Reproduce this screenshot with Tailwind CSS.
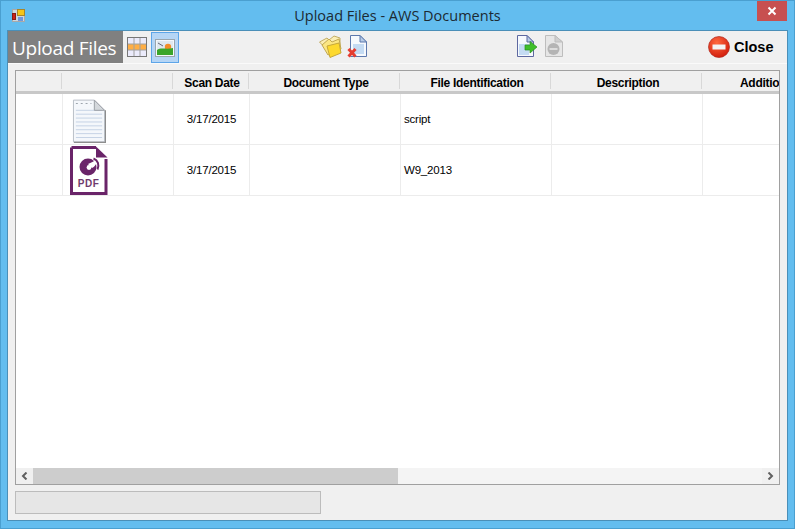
<!DOCTYPE html>
<html lang="en">
<head>
  <meta charset="UTF-8">
  <title>Upload Files - AWS Documents</title>
  <script src="https://cdn.jsdelivr.net/npm/@tailwindcss/browser@4"></script>
</head>
<body class="m-0 overflow-hidden bg-white">
  <div class="w-[795px] h-[529px] flex flex-col bg-[#63bdef] border border-[#4a9fd0] font-['Liberation_Sans',sans-serif] text-black">

    <!-- Title bar -->
    <div class="h-[29px] flex shrink-0 items-start relative">
      <svg class="absolute left-[10px] top-[7px]" width="16" height="16" viewBox="0 0 16 16">
        <rect x="1.500" y="1.500" width="12" height="12" fill="#cfd8de" stroke="#a9a9a9"/>
        <rect x="6.500" y="1.500" width="7" height="6" fill="#f5c518" stroke="#a8862a"/>
        <rect x="1.500" y="5.500" width="3" height="6" fill="#c9221c" stroke="#8b1a14"/>
        <rect x="7" y="9" width="5" height="4" fill="#6f97dd"/>
      </svg>
      <div class="w-full text-center text-[14.5px] leading-[30px] font-['Open_Sans',sans-serif] text-[#1c2a33]">Upload Files - AWS Documents</div>
      <div class="absolute right-[7px] top-0 w-[30px] h-[20px] bg-[#c75050] flex items-center justify-center">
        <svg width="10" height="10" viewBox="0 0 10 10"><path d="M1.500 1.500 8.500 8.500M8.500 1.500 1.500 8.500" stroke="#fff" stroke-width="2"/></svg>
      </div>
    </div>

    <!-- Window body -->
    <div class="mx-[6px] mb-[7px] flex-1 flex flex-col bg-[#f0f0f0] border border-[#4a8fb8] min-h-0">

      <!-- Toolbar -->
      <div class="h-[33px] flex items-start shrink-0 relative border-b border-[#fafafa]">
        <div class="w-[115px] h-[32px] bg-[#808080] text-white text-[19px] tracking-[-0.300px] leading-[34px] pl-[4px] font-['Open_Sans',sans-serif] whitespace-nowrap">Upload Files</div>
        <!-- grid view -->
        <svg class="ml-[4px] mt-[6px]" width="20" height="20" viewBox="0 0 20 20">
          <rect x="0.500" y="0.500" width="19" height="19" fill="#ebebfb" stroke="#777"/>
          <rect x="1" y="7" width="18" height="6" fill="#ffae45"/>
          <path d="M7 1V19M13 1V19M1 7H19M1 13H19" stroke="#a0a0a0" stroke-width="1"/>
        </svg>
        <!-- picture view -->
        <div class="ml-[4px] mt-[1px] w-[28px] h-[31px] bg-[#b5d5f5] border border-[#5da5e8] flex items-center justify-center">
          <svg width="20" height="18" viewBox="0 0 20 18">
            <rect x="0.500" y="0.500" width="19" height="17" fill="#f4f7fb" stroke="#9aa5ad"/>
            <rect x="2" y="2" width="16" height="14" fill="#dfe7ee"/>
            <circle cx="13" cy="8" r="3.200" fill="#f28c28"/>
            <path d="M2 11C6 8 11 11 18 9V16H2Z" fill="#3aa52a"/>
            <path d="M3 4 8 7" stroke="#667" stroke-width="1"/>
          </svg>
        </div>
        <!-- open folder -->
        <svg class="absolute left-[311px] top-[4px]" width="23" height="23" viewBox="0 0 23 23">
          <path d="M0.500 7 8 3 10 5 15 1 21 3 21 12 9 16Z" fill="#fbeeb5" stroke="#c2ad66"/>
          <path d="M3 10 10 4 13 7 20 4 22 14 9 20Z" fill="#fbe683" stroke="#c2a850"/>
          <path d="M8 11 20 8 22 18 11 22.500Z" fill="#fdd92e" stroke="#c6a83a"/>
        </svg>
        <!-- remove file -->
        <svg class="absolute left-[339px] top-[4px]" width="21" height="23" viewBox="0 0 21 23">
          <path d="M3.500 .5H13L19.500 7V21.500H3.500Z" fill="#f6f9fd" stroke="#5d78ad"/>
          <path d="M13 .5V7H19.500Z" fill="#b7cbe6" stroke="#5d78ad"/>
          <rect x="6" y="9" width="11" height="10" fill="#c4dbf3"/>
          <path d="M1.500 14 8.500 21.500M8.500 14 1.500 21.500" stroke="#e53d30" stroke-width="3"/>
        </svg>
        <!-- send file -->
        <svg class="absolute left-[508px] top-[4px]" width="22" height="23" viewBox="0 0 22 23">
          <path d="M1.500 .5H11L17.500 7V21.500H1.500Z" fill="#f6f9fd" stroke="#5d68a0"/>
          <path d="M11 .5V7H17.500Z" fill="#b7cbe6" stroke="#5d68a0"/>
          <rect x="3" y="9" width="10" height="11" fill="#c4dbf3"/>
          <path d="M9 10H14V6.500L21 12 14 18V15H9Z" fill="#3fbf2a" stroke="#2a8f20" stroke-width=".7"/>
        </svg>
        <!-- stop, disabled -->
        <svg class="absolute left-[536px] top-[4px]" width="20" height="23" viewBox="0 0 20 23">
          <path d="M1.500 .5H11L18.500 7V21.500H1.500Z" fill="#e6e6e6" stroke="#bdbdbd"/>
          <path d="M11 .5V7H18.500Z" fill="#cfcfcf" stroke="#bdbdbd"/>
          <circle cx="9.500" cy="14" r="6" fill="#b4b4b4"/>
          <rect x="5.500" y="13" width="8" height="2" fill="#dcdcdc"/>
        </svg>
        <!-- close -->
        <div class="absolute left-[700px] top-[5px] flex items-center gap-[4px]">
          <svg width="22" height="22" viewBox="0 0 22 22">
            <defs><radialGradient id="redball" cx="40%" cy="30%" r="75%"><stop offset="0" stop-color="#ff6a40"/><stop offset="1" stop-color="#d01a0a"/></radialGradient></defs>
            <circle cx="11" cy="11" r="10.500" fill="url(#redball)" stroke="#b02a20" stroke-width=".7"/>
            <rect x="4.500" y="8.500" width="13" height="5" fill="#f4f4f4"/>
          </svg>
          <span class="text-[14.500px] font-bold leading-[22px]">Close</span>
        </div>
      </div>

      <!-- Table -->
      <div class="ml-[7px] mt-[6px] w-[765px] h-[415px] border border-[#a0a0a0] bg-white flex flex-col overflow-hidden shrink-0">
        <div class="h-[23px] bg-[#f0f0f0] border-b-[3px] border-[#c8c8c8] flex shrink-0 text-[12px] font-bold tracking-[-0.300px] leading-[24px] text-center whitespace-nowrap">
          <div class="w-[46px] shrink-0 border-r border-[#d8d8d8] my-[2px] h-[16px]"></div>
          <div class="w-[111px] shrink-0 border-r border-[#d8d8d8] my-[2px] h-[16px]"></div>
          <div class="w-[76px] shrink-0 flex"><span class="flex-1 pl-[3px]">Scan Date</span><span class="border-r border-[#d8d8d8] my-[2px] h-[16px]"></span></div>
          <div class="w-[151px] shrink-0 flex"><span class="flex-1 pl-[4px]">Document Type</span><span class="border-r border-[#d8d8d8] my-[2px] h-[16px]"></span></div>
          <div class="w-[151px] shrink-0 flex"><span class="flex-1 pl-[4px]">File Identification</span><span class="border-r border-[#d8d8d8] my-[2px] h-[16px]"></span></div>
          <div class="w-[151px] shrink-0 flex"><span class="flex-1 pl-[4px]">Description</span><span class="border-r border-[#d8d8d8] my-[2px] h-[16px]"></span></div>
          <div class="w-[78px] shrink-0 pl-[38px] text-left overflow-hidden">Additional</div>
        </div>

        <!-- Row 1 -->
        <div class="h-[51px] flex shrink-0 border-b border-[#ececec] text-[11.500px] tracking-[-0.200px] leading-[50px] whitespace-nowrap">
          <div class="w-[47px] shrink-0 border-r border-[#ececec]"></div>
          <div class="w-[111px] shrink-0 border-r border-[#ececec] pl-[9px] pt-[5px]">
            <svg class="block" width="34" height="44" viewBox="0 0 35 44">
              <path d="M1.500 .5H23L33.500 11V43.500H1.500Z" fill="#f4f7fb" stroke="#b8bec6"/>
              <path d="M4 11H31M4 15H31M4 19H31M4 23H31M4 27H31M4 31H31M4 35H31M4 39H31" stroke="#c4d2e4"/>
              <path d="M23 .5V11H33.500Z" fill="#d4d8dc" stroke="#9a9ea4"/>
              <path d="M34.500 11V44H2" fill="none" stroke="#8d8d8d" stroke-width="1.200"/>
              <path d="M4 4H20" stroke="#9aa2aa" stroke-dasharray="2 3"/>
            </svg>
          </div>
          <div class="w-[76px] shrink-0 border-r border-[#ececec] text-center">3/17/2015</div>
          <div class="w-[151px] shrink-0 border-r border-[#ececec]"></div>
          <div class="w-[151px] shrink-0 border-r border-[#ececec] pl-[3px]">script</div>
          <div class="w-[151px] shrink-0 border-r border-[#ececec]"></div>
          <div class="flex-1"></div>
        </div>

        <!-- Row 2 -->
        <div class="h-[51px] flex shrink-0 border-b border-[#ececec] text-[11.500px] tracking-[-0.200px] leading-[50px] whitespace-nowrap">
          <div class="w-[47px] shrink-0 border-r border-[#ececec]"></div>
          <div class="w-[111px] shrink-0 border-r border-[#ececec] pl-[7px] pt-[1px]">
            <svg class="block" width="38" height="49" viewBox="0 0 38 49">
              <path d="M1.500 1.500H26M36 13V47.500H1.500V1.500" fill="none" stroke="#6a2469" stroke-width="3"/>
              <path d="M26 .5 37.500 11.500H26Z" fill="#6a2469"/>
              <circle cx="18" cy="21" r="8.500" fill="#6a2469"/>
              <path d="M18 18C21 16.500 24 16 26.500 13C27.500 16 26 20 22 22Z" fill="#fff"/>
              <path d="M23.500 12.500C28 14 29.500 19 27.500 23.500" fill="none" stroke="#6a2469" stroke-width="2"/>
              <circle cx="19" cy="21.500" r="2.400" fill="#fff"/>
              <text x="18.500" y="41" text-anchor="middle" font-family="Liberation Sans" font-weight="700" font-size="10" letter-spacing=".5" fill="#6f3a6e">PDF</text>
            </svg>
          </div>
          <div class="w-[76px] shrink-0 border-r border-[#ececec] text-center">3/17/2015</div>
          <div class="w-[151px] shrink-0 border-r border-[#ececec]"></div>
          <div class="w-[151px] shrink-0 border-r border-[#ececec] pl-[3px]">W9_2013</div>
          <div class="w-[151px] shrink-0 border-r border-[#ececec]"></div>
          <div class="flex-1"></div>
        </div>

        <div class="flex-1"></div>

        <!-- Horizontal scrollbar -->
        <div class="h-[16px] flex shrink-0 bg-[#f0f0f0]">
          <div class="w-[17px] flex items-center justify-center">
            <svg width="7" height="8" viewBox="0 0 7 8"><path d="M5.500 .5 2 4l3.500 3.500" fill="none" stroke="#606060" stroke-width="2"/></svg>
          </div>
          <div class="w-[365px] bg-[#cdcdcd]"></div>
          <div class="flex-1 bg-[#f4f4f4]"></div>
          <div class="w-[17px] flex items-center justify-center">
            <svg width="7" height="8" viewBox="0 0 7 8"><path d="M1.500 .5 5 4 1.500 7.500" fill="none" stroke="#606060" stroke-width="2"/></svg>
          </div>
        </div>
      </div>

      <!-- Progress bar -->
      <div class="ml-[7px] mt-[6px] w-[306px] h-[23px] bg-[#e6e6e6] border border-[#bcbcbc] shrink-0"></div>
    </div>
  </div>
</body>
</html>
